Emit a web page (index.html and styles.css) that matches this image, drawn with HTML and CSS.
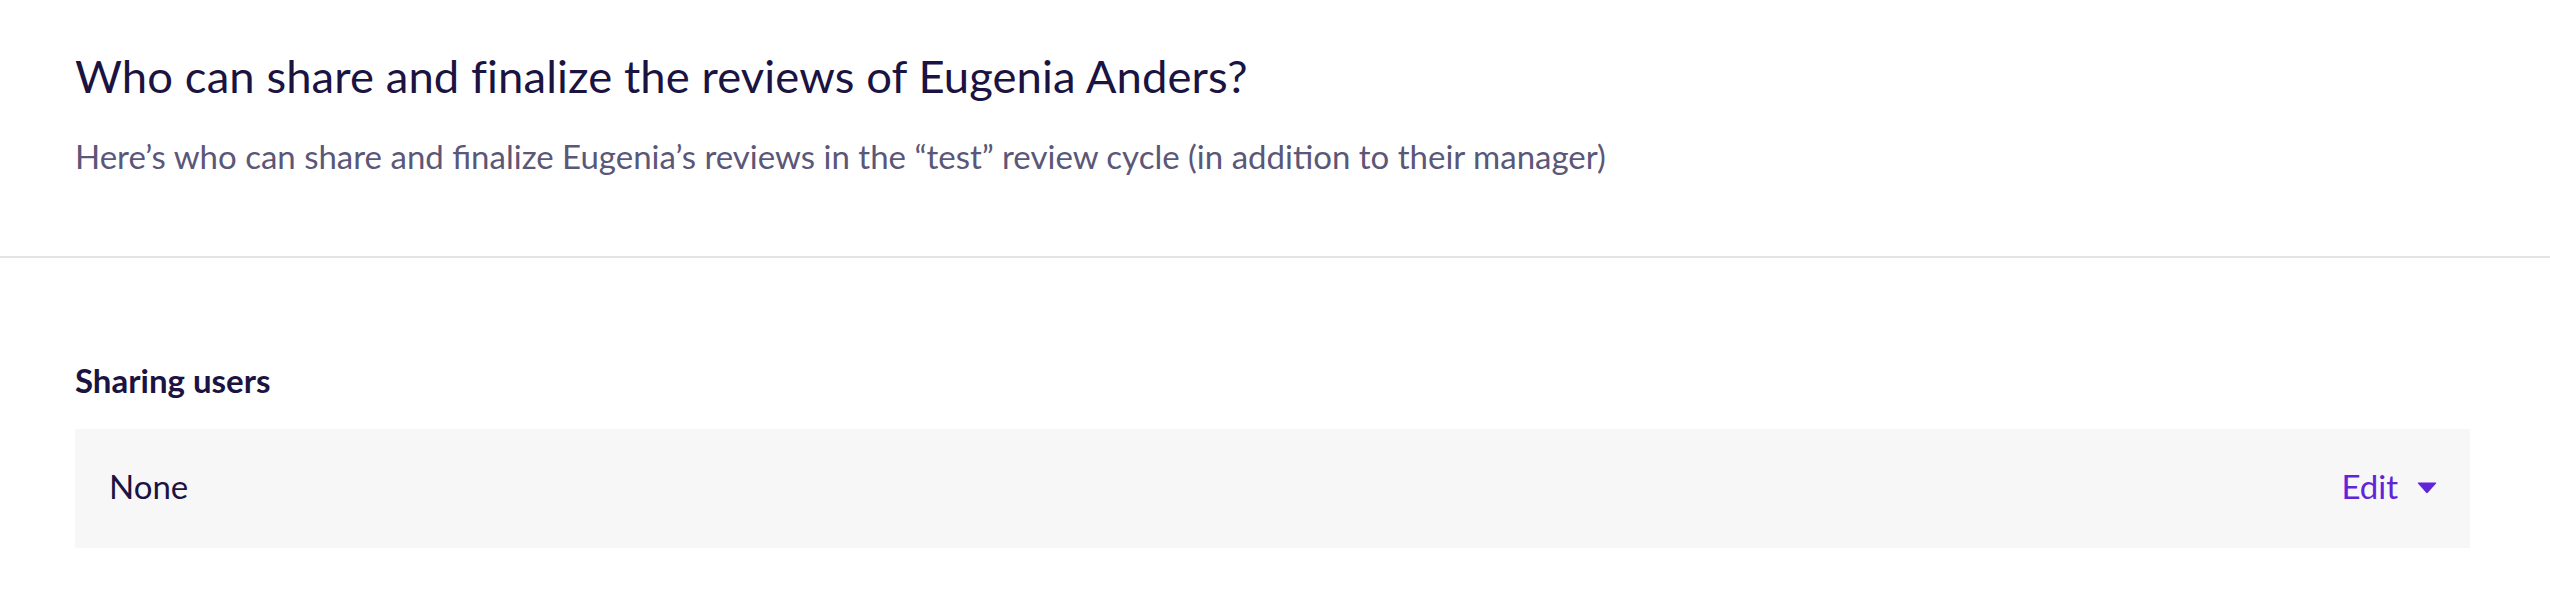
FILE: index.html
```html
<!DOCTYPE html>
<html lang="en">
<head>
<meta charset="utf-8">
<title>Sharing users</title>
<link rel="stylesheet" href="styles.css">
</head>
<body>
<header class="intro">
  <h1 class="intro-title">Who can share and finalize the reviews of Eugenia Anders?</h1>
  <p class="intro-text">Here’s who can share and finalize Eugenia’s reviews in the “test” review cycle (in addition to their manager)</p>
</header>
<main class="content">
  <section class="field">
    <h2 class="field-label">Sharing users</h2>
    <div class="field-box">
      <span class="field-value">None</span>
      <button class="edit-btn" type="button">Edit
        <svg class="edit-caret" width="20" height="12" viewBox="0 0 20 12" aria-hidden="true"><path d="M1 1.5 Q0.2 0.5 1.6 0.5 H18.4 Q19.8 0.5 19 1.5 L10.8 10.8 Q10 11.6 9.2 10.8 Z" fill="currentColor"/></svg>
      </button>
    </div>
  </section>
</main>
</body>
</html>
```
FILE: styles.css
```css
html, body {
  margin: 0;
  padding: 0;
  background: #ffffff;
}
body {
  font-family: Lato, "Noto Sans", "Liberation Sans", sans-serif;
  color: #1b1341;
}
.intro {
  padding: 49px 75px 80px;
  border-bottom: 2px solid #e4e4e4;
}
.intro-title {
  margin: 0;
  font-size: 45.4px;
  line-height: 54px;
  font-weight: 400;
  letter-spacing: 0.1px;
  color: #1b1341;
}
.intro-text {
  margin: 33px 0 0;
  font-size: 33px;
  line-height: 40px;
  color: #5b5778;
}
.content {
  padding: 0 80px 0 75px;
}
.field {
  padding-top: 102px;
}
.field-label {
  margin: 0 0 29px;
  font-size: 33px;
  line-height: 40px;
  font-weight: 700;
  color: #1b1341;
}
.field-box {
  display: flex;
  align-items: center;
  justify-content: space-between;
  box-sizing: border-box;
  height: 119px;
  padding: 0 33px 6px 34px;
  background: #f7f7f7;
}
.field-value {
  font-size: 33px;
  line-height: 40px;
  color: #1b1341;
}
.edit-btn {
  display: flex;
  align-items: center;
  gap: 19px;
  padding: 0;
  border: 0;
  background: none;
  font-family: inherit;
  font-size: 33px;
  line-height: 40px;
  color: #6124d8;
  cursor: pointer;
}
.edit-caret {
  display: block;
  margin-top: 4px;
}
```
